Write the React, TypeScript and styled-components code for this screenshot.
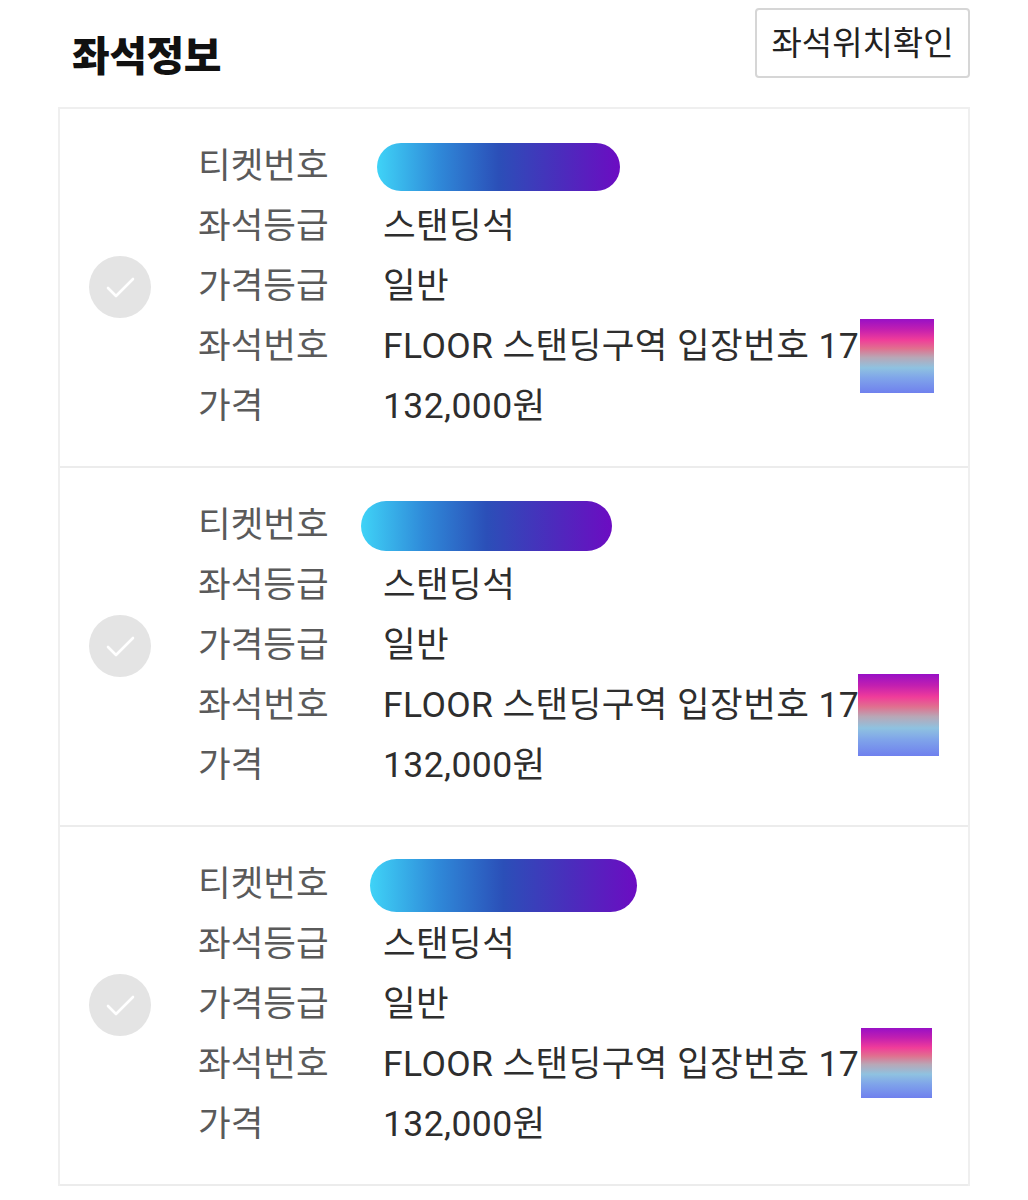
import React from "react";
import styled, { createGlobalStyle } from "styled-components";

const GlobalStyle = createGlobalStyle`
  html, body {
    margin: 0;
    padding: 0;
    background: #fff;
  }
  body {
    font-family: Roboto, "Noto Sans CJK KR", "Noto Sans", sans-serif;
    color: #333;
  }
`;

const Page = styled.div`
  padding: 8px 58px 0 58px;
`;

const Header = styled.div`
  display: flex;
  align-items: center;
  justify-content: space-between;
  height: 70px;
  padding-left: 14px;
  margin-bottom: 29px;
`;

const Title = styled.h2`
  margin: 0;
  margin-top: 20px;
  font-size: 41px;
  font-weight: 900;
  color: #111;
  letter-spacing: -0.5px;
`;

const LocationButton = styled.button`
  height: 70px;
  width: 215px;
  border: 2px solid #d6d6d6;
  border-radius: 4px;
  background: #fff;
  font-family: inherit;
  font-size: 33px;
  color: #222;
  padding: 0 0 4px 0;
  cursor: pointer;
`;

const Card = styled.div`
  border: 2px solid #efefef;
  border-bottom: none;
`;

const Section = styled.div`
  position: relative;
  display: flex;
  align-items: center;
  padding: 28px 0 29px 29px;
  border-bottom: 2px solid #ececec;
`;

const Check = styled.div`
  width: 62px;
  height: 62px;
  border-radius: 50%;
  background: #e4e4e4;
  display: flex;
  align-items: center;
  justify-content: center;
  margin-right: 47px;
  flex-shrink: 0;
`;

const Rows = styled.div`
  display: flex;
  flex-direction: column;
`;

const Row = styled.div`
  display: flex;
  align-items: center;
  height: 60px;
  font-size: 35.5px;
  line-height: 1;
`;

const Label = styled.span`
  width: 185px;
  color: #5a5a5a;
  flex-shrink: 0;
  margin-top: -1px;
`;

const Value = styled.span`
  color: #2e2e2e;
  white-space: nowrap;
  margin-top: -1px;
  letter-spacing: 0.4px;
`;

const Pill = styled.div<{ $offset: number; $width: number; $height: number }>`
  margin-left: ${(p) => p.$offset}px;
  width: ${(p) => p.$width}px;
  height: ${(p) => p.$height}px;
  border-radius: ${(p) => p.$height / 2}px;
  background: linear-gradient(90deg, #3fd3f7 0%, #2f8ad9 25%, #2b4fb8 50%, #4a2dbc 75%, #6c0cc2 100%);
`;

const Square = styled.div<{ $left: number; $top: number; $w: number; $h: number }>`
  position: absolute;
  left: ${(p) => p.$left}px;
  top: ${(p) => p.$top}px;
  width: ${(p) => p.$w}px;
  height: ${(p) => p.$h}px;
  background: linear-gradient(
    180deg,
    #9810c6 0%,
    #c21fb0 14%,
    #f03c9a 28%,
    #e0708f 40%,
    #b8a7b6 52%,
    #8fc2e0 66%,
    #7fa4ea 80%,
    #6f80ee 100%
  );
`;

type Ticket = {
  pill: { offset: number; width: number; height: number };
  square: { left: number; top: number; w: number; h: number };
};

const tickets: Ticket[] = [
  { pill: { offset: -6, width: 243, height: 48 }, square: { left: 800, top: 210, w: 74, h: 74 } },
  { pill: { offset: -22, width: 251, height: 50 }, square: { left: 798, top: 206, w: 81, h: 82 } },
  { pill: { offset: -13, width: 267, height: 53 }, square: { left: 801, top: 201, w: 71, h: 70 } },
];

const CheckIcon = () => (
  <svg width="36" height="36" viewBox="0 0 36 36" fill="none">
    <path d="M6 19 L14 27 L31 10" stroke="#fff" strokeWidth="2.6" strokeLinecap="round" strokeLinejoin="round" />
  </svg>
);

export default function App() {
  return (
    <>
      <GlobalStyle />
      <Page>
        <Header>
          <Title>좌석정보</Title>
          <LocationButton>좌석위치확인</LocationButton>
        </Header>
        <Card>
          {tickets.map((t, i) => (
            <Section key={i}>
              <Check>
                <CheckIcon />
              </Check>
              <Rows>
                <Row>
                  <Label>티켓번호</Label>
                  <Pill $offset={t.pill.offset} $width={t.pill.width} $height={t.pill.height} />
                </Row>
                <Row>
                  <Label>좌석등급</Label>
                  <Value>스탠딩석</Value>
                </Row>
                <Row>
                  <Label>가격등급</Label>
                  <Value>일반</Value>
                </Row>
                <Row>
                  <Label>좌석번호</Label>
                  <Value>FLOOR 스탠딩구역 입장번호 17</Value>
                </Row>
                <Row>
                  <Label>가격</Label>
                  <Value>132,000원</Value>
                </Row>
              </Rows>
              <Square $left={t.square.left} $top={t.square.top} $w={t.square.w} $h={t.square.h} />
            </Section>
          ))}
        </Card>
      </Page>
    </>
  );
}
